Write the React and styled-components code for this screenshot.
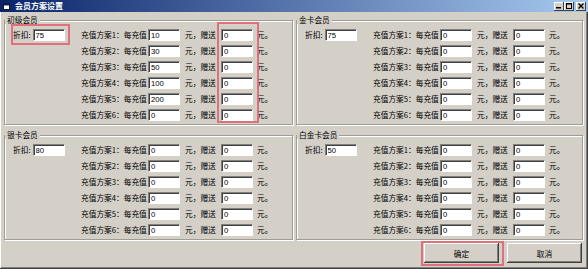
import React from 'react';
import styled, { createGlobalStyle } from 'styled-components';

const GlobalStyle = createGlobalStyle`
  html, body {
    margin: 0;
    padding: 0;
    background: #d4d0c8;
  }
  body {
    font-family: "Noto Sans CJK SC", "Liberation Sans", sans-serif;
  }
`;

const Window = styled.div`
  position: relative;
  width: 588px;
  height: 269px;
  box-sizing: border-box;
  background: #d4d0c8;
  box-shadow: inset -1px -1px #404040, inset 1px 0 #ffffff, inset -2px -2px #808080;
  overflow: hidden;
  font-size: 7.7px;
  color: #000;
`;

const TitleBar = styled.div`
  height: 12px;
  display: flex;
  align-items: center;
  padding: 0 2px 0 3px;
  background: linear-gradient(to right, #0a246a, #a6caf0);
`;

const TitleText = styled.span`
  margin-left: 4px;
  color: #fff;
  font-weight: bold;
  font-size: 8px;
  line-height: 12px;
`;

const TitleButtons = styled.div`
  margin-left: auto;
  display: flex;
`;

const TitleButton = styled.div`
  width: 10px;
  height: 9px;
  margin-left: ${p => (p.$gap ? '2px' : '0')};
  background: #d4d0c8;
  box-shadow: inset -1px -1px #404040, inset 1px 1px #ffffff;
  display: flex;
  align-items: center;
  justify-content: center;
`;

const Groups = styled.div`
  display: grid;
  grid-template-columns: 289px 287px;
  column-gap: 3px;
  row-gap: 6px;
  padding: 4px 0 0 4px;
`;

const Group = styled.fieldset`
  margin: 0;
  padding: 5px 0 0 0;
  min-width: 0;
  height: 109px;
  box-sizing: border-box;
  border: 1px solid #a09c94;
  box-shadow: inset 1px 1px #ffffff, 1px 1px #ffffff;
  display: flex;
  align-items: flex-start;
`;

const Legend = styled.legend`
  padding: 0 2px;
  margin-left: 0;
  font-size: 7.7px;
  line-height: 8px;
  background: #d4d0c8;
`;

const Discount = styled.div`
  width: 68px;
  padding-left: 8px;
  height: 12px;
  display: flex;
  align-items: center;
  gap: 2px;
  line-height: 12px;
`;

const Plans = styled.div`
  display: flex;
  flex-direction: column;
  gap: 4px;
`;

const PlanRow = styled.div`
  display: grid;
  grid-template-columns: 67px 33px 40px 33px auto;
  align-items: center;
  height: 12px;
  line-height: 12px;
  white-space: nowrap;
`;

const Unit = styled.span`
  padding-left: ${p => p.$pad}px;
`;

const Field = styled.input`
  width: 32px;
  height: 12px;
  box-sizing: border-box;
  margin: 0;
  padding: 0 0 0 2px;
  border: 1px solid;
  border-color: #808080 #ffffff #ffffff #808080;
  box-shadow: inset 1px 1px #404040;
  background: #fff;
  font-family: "Liberation Sans", sans-serif;
  font-size: 7.7px;
  color: #000;
  outline: none;
`;

const ButtonRow = styled.div`
  display: flex;
  justify-content: flex-end;
  gap: 8px;
  padding-right: 6px;
  margin-top: 3px;
`;

const Button = styled.button`
  width: 75px;
  height: 20px;
  border: none;
  background: #d4d0c8;
  box-shadow: inset -1px -1px #404040, inset 1px 1px #ffffff, inset -2px -2px #808080;
  font-family: "Noto Sans CJK SC", sans-serif;
  font-size: 7.7px;
  color: #000;
  padding: 0;
`;

const Highlight = styled.div`
  position: absolute;
  box-sizing: border-box;
  border: 2px solid rgba(224, 96, 112, 0.85);
  pointer-events: none;
`;

const groups = [
  { name: '初级会员', discount: '75', pay: ['10', '30', '50', '100', '200', '0'] },
  { name: '金卡会员', discount: '75', pay: ['0', '0', '0', '0', '0', '0'] },
  { name: '银卡会员', discount: '80', pay: ['0', '0', '0', '0', '0', '0'] },
  { name: '白金卡会员', discount: '50', pay: ['0', '0', '0', '0', '0', '0'] },
];

const AppIcon = () => (
  <svg width="8" height="8" viewBox="0 0 8 8">
    <rect x="0.5" y="1.5" width="6" height="6" fill="#fff" stroke="#1a1a1a" strokeWidth="1" />
    <rect x="1" y="2" width="5" height="1.5" fill="#0a246a" />
  </svg>
);

const MemberGroup = ({ group }) => (
  <Group>
    <Legend>{group.name}</Legend>
    <Discount>
      <span>折扣:</span>
      <Field readOnly value={group.discount} />
    </Discount>
    <Plans>
      {group.pay.map((amount, i) => (
        <PlanRow key={i}>
          <span>充值方案{i + 1}：每充值</span>
          <Field readOnly value={amount} />
          <Unit $pad={4}>元，赠送</Unit>
          <Field readOnly value="0" />
          <Unit $pad={3}>元。</Unit>
        </PlanRow>
      ))}
    </Plans>
  </Group>
);

const App = () => (
  <>
    <GlobalStyle />
    <Window>
      <TitleBar>
        <AppIcon />
        <TitleText>会员方案设置</TitleText>
        <TitleButtons>
          <TitleButton>
            <svg width="6" height="6" viewBox="0 0 6 6"><rect x="0" y="4" width="5" height="1.5" fill="#000" /></svg>
          </TitleButton>
          <TitleButton>
            <svg width="6" height="6" viewBox="0 0 6 6"><rect x="0.5" y="0.5" width="5" height="5" fill="none" stroke="#000" strokeWidth="1" /><rect x="0.5" y="0.5" width="5" height="1" fill="#000" /></svg>
          </TitleButton>
          <TitleButton $gap>
            <svg width="6" height="6" viewBox="0 0 6 6"><path d="M0.5 0.5 L5.5 5.5 M5.5 0.5 L0.5 5.5" stroke="#000" strokeWidth="1.3" /></svg>
          </TitleButton>
        </TitleButtons>
      </TitleBar>
      <Groups>
        {groups.map(g => (
          <MemberGroup key={g.name} group={g} />
        ))}
      </Groups>
      <ButtonRow>
        <Button>确定</Button>
        <Button>取消</Button>
      </ButtonRow>
      <Highlight style={{ left: 11, top: 24, width: 59, height: 21 }} />
      <Highlight style={{ left: 217, top: 22, width: 42, height: 101 }} />
      <Highlight style={{ left: 421, top: 241, width: 83, height: 25 }} />
    </Window>
  </>
);

export default App;
